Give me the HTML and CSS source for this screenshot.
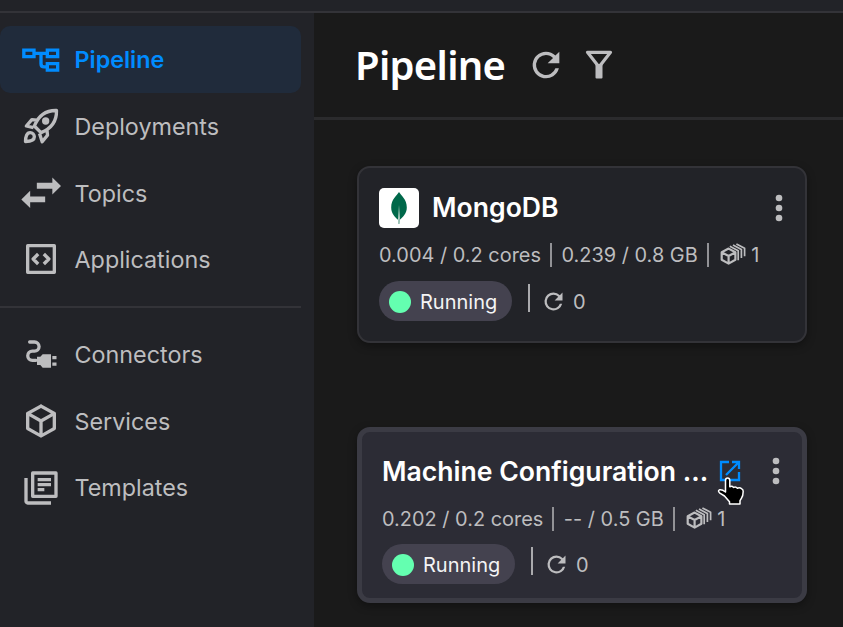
FILE: index.html
```html
<!DOCTYPE html>
<html lang="en">
<head>
<meta charset="utf-8">
<title>Pipeline</title>
<link rel="stylesheet" href="styles.css">
</head>
<body>
<svg class="defs" width="0" height="0">
  <symbol id="refresh" viewBox="0 0 24 24"><path d="M17.65 6.35A7.958 7.958 0 0 0 12 4a8 8 0 1 0 7.73 10h-2.08A6 6 0 1 1 12 6c1.66 0 3.14.69 4.22 1.78L13 11h7V4z"/></symbol>
  <symbol id="dots" viewBox="0 0 24 24"><circle cx="12" cy="6" r="2"/><circle cx="12" cy="12" r="2"/><circle cx="12" cy="18" r="2"/></symbol>
  <symbol id="replicas" viewBox="0 0 26 22"><g fill="none" stroke="currentColor" stroke-width="2.200" stroke-linejoin="round"><path d="M8.600 5.600 15.400 9.200v7.600L8.600 20.600 1.700 16.800V9.200zM1.900 9.400l6.700 3.600 6.600-3.600M8.600 13v7.500"/><path d="M9.800 3.300l8.400 4.500v9.400M13 1.900l8.400 4.500v8.600M16.400.9l8.200 4.300v8" stroke-width="1.700"/></g></symbol>
</svg>
<header class="topbar"></header>
<div class="shell">
  <nav class="sidebar">
    <a class="item active"><svg viewBox="0 0 24 24"><path fill="none" stroke="currentColor" stroke-width="2" d="M1.700 6.700h6.100v3.900H1.700zM15.800 6.700H22v3.900h-6.200zM15.800 14.800H22v3.900h-6.200zM8 8.600h8M12 8.600v6.200q0 1.900 1.900 1.900h2"/></svg><span>Pipeline</span></a>
    <a class="item"><svg viewBox="0 0 24 24"><g fill="none" stroke="currentColor" stroke-width="2" stroke-linejoin="round"><path d="M8 12C10 7 14 2.500 21.300 2.700 21.500 10 17 14 12 16zM9.500 8.500 6.500 8.200 3.200 12l4.300 1M15.600 14.500l.3 3-3.200 4-1.600-5"/><path d="M2.700 21.300c0-3 .8-5.300 2.800-5.300 1.400 0 2.500 1.100 2.500 2.500 0 2-2.300 2.800-5.300 2.800z"/></g><circle cx="14.800" cy="9" r="2.200"/></svg><span>Deployments</span></a>
    <a class="item"><svg viewBox="0 0 24 24"><path transform="translate(0 -.9)" d="M9.500 6.800h9.300V3.600L24 8.700l-5.200 5.100v-3.500H9.500zM14.500 15h-9v-3.500L.2 16.800l5.300 5.100v-3.500h9z"/></svg><span>Topics</span></a>
    <a class="item code"><svg viewBox="0 0 24 24"><path fill="none" stroke="currentColor" stroke-width="2" stroke-linejoin="round" d="M4 4h16v16H4zM10.300 9l-3 3 3 3M13.700 9l3 3-3 3"/></svg><span>Applications</span></a>
    <hr>
    <a class="item"><svg viewBox="0 0 24 24"><path fill="none" stroke="currentColor" stroke-width="2" stroke-linecap="round" d="M5.200 4.200h2.900a2.750 2.750 0 0 1 0 5.500H6.800a2.750 2.750 0 0 0 0 5.500H9"/><path d="M9.600 13h2l1.400-1.400h5v8h-5L11.600 18h-2zM18.800 12.600h2.500v2h-2.500zM18.800 16.500h2.500v2h-2.500z"/></svg><span>Connectors</span></a>
    <a class="item"><svg viewBox="0 0 24 24"><path d="M21 16.500c0 .380-.210.710-.530.880l-7.900 4.440c-.160.120-.360.180-.570.180s-.410-.060-.570-.180l-7.900-4.440A.99.99 0 0 1 3 16.500v-9c0-.380.210-.710.530-.880l7.900-4.440c.160-.120.360-.180.570-.180s.410.060.570.180l7.900 4.440c.320.170.530.500.530.880zM12 4.150 6.040 7.500 12 10.850l5.960-3.350zM5 15.910l6 3.380v-6.710L5 9.210zm14 0v-6.700l-6 3.370v6.710z"/></svg><span>Services</span></a>
    <a class="item"><svg viewBox="0 0 24 24"><path d="M4 6H2v14c0 1.100.9 2 2 2h14v-2H4z"/><path fill="none" stroke="currentColor" stroke-width="2" stroke-linejoin="round" d="M7 3h14v14H7zM10 7h8M10 10h8M10 13h4"/></svg><span>Templates</span></a>
  </nav>
  <main class="main">
    <div class="head"><h1>Pipeline</h1><svg class="h-refresh"><use href="#refresh"/></svg><svg class="h-filter" viewBox="0 0 28 29"><path fill="none" stroke="currentColor" stroke-width="3.200" stroke-linejoin="round" d="M2.500 2.300h23L14 17z"/><path d="M10.500 14h7v13.500q0 1-1 1h-5q-1 0-1-1z"/></svg></div>
    <section class="cards">
      <article class="card">
        <div class="title"><svg class="logo" viewBox="0 0 40 40"><rect width="40" height="40" rx="5" fill="#fff"/><path fill="#00684a" d="M20 4c2 3.500 7.800 7 7.800 15.500 0 6-3.800 9.500-7 12.200L20.300 36h-.8l-.5-4.300c-3.200-2.700-6.800-6.200-6.800-12.200C12.200 11 18 7.500 20 4z"/><path fill="#c9ddd5" d="M20 17l.8 13-.5 6h-.8l-.4-5z"/></svg><h2>MongoDB</h2><svg class="more"><use href="#dots"/></svg></div>
        <div class="stats"><span>0.004 / 0.2 cores</span><i></i><span>0.239 / 0.8 GB</span><i></i><svg class="reps"><use href="#replicas"/></svg><span>1</span></div>
        <div class="status"><span class="pill"><b></b>Running</span><i></i><svg><use href="#refresh"/></svg><span>0</span></div>
      </article>
      <article class="card hover">
        <div class="title"><h2>Machine Configuration ...</h2><span class="open"><svg viewBox="0 0 22 22"><path fill="none" stroke="currentColor" stroke-width="2.300" d="M10 2H2v18h18v-8M13 2h7v7M20 2 7 15"/></svg><svg class="cursor" viewBox="0 0 28 28"><path fill="#000" stroke="#fff" stroke-width="1.500" stroke-linejoin="round" d="M8.500 3.500Q8.500 1 10.600 1t2.200 2.500v6.300q2-1.300 3.800.6 2.200-1.200 3.800.8 2.200-1 4.400.6 1.400.8 1.400 2.800 0 4.500-2 7.100l-1.200 2V27H12.500v-2.300L7.500 19l-5-3.200q-2-2 0-3 2.500-.6 6 2.200z"/></svg></span><svg class="more"><use href="#dots"/></svg></div>
        <div class="stats"><span>0.202 / 0.2 cores</span><i></i><span>-- / 0.5 GB</span><i></i><svg class="reps"><use href="#replicas"/></svg><span>1</span></div>
        <div class="status"><span class="pill"><b></b>Running</span><i></i><svg><use href="#refresh"/></svg><span>0</span></div>
      </article>
    </section>
  </main>
</div>
</body>
</html>
```
FILE: styles.css
```css
* { box-sizing: border-box; margin: 0; padding: 0; }
html, body { height: 100%; overflow: hidden; }
body { display: flex; flex-direction: column; background: #1a1a1a; color: #bdbdbf; font-family: Inter, sans-serif; font-size: 24px; }
svg { display: block; flex: none; fill: currentColor; }
.defs { position: absolute; }
.topbar { flex: none; height: 13px; background: #222328; border-bottom: 2px solid #333338; }
.shell { flex: 1; display: flex; min-height: 0; }
.sidebar { width: 314px; flex: none; background: #222328; padding: 13px 13px 0 0; }
.item { display: flex; align-items: center; gap: 13.500px; height: 66.67px; padding-left: 21px; font-size: 23.330px; line-height: 30px; }
.item svg { width: 40px; height: 40px; }
.item span { padding-top: 2px; }
.item.active span, .item.code span, hr ~ .item span { padding-top: 1px; }
.item.active { background: #202b3b; color: #008cff; font-weight: 600; border-radius: 10px; }
hr { border: 0; height: 2px; background: #333338; margin: 13px 0 13.600px; }
.main { flex: 1; min-width: 0; }
.head { height: 107px; display: flex; align-items: center; border-bottom: 3px solid #2b2b2d; padding-left: 41px; }
h1 { color: #fff; font: 600 40px/50px "Noto Sans", sans-serif; letter-spacing: -.7px; }
.h-refresh { width: 40px; height: 40px; margin: -1px 0 0 21px; }
.h-filter { width: 28px; height: 29px; margin: -1px 0 0 19px; }
.cards { padding: 46px 36px 0 43px; display: flex; flex-direction: column; gap: 84px; }
.card { height: 177px; border: 2px solid #333338; border-radius: 13px; background: #222328; padding: 20px 20px 0; box-shadow: 0 3px 8px rgba(0,0,0,.35); }
.card.hover { background: #2c2c35; border: 5px solid #3b3b44; height: 176px; padding-top: 19px; }
.title { display: flex; align-items: center; height: 40px; }
.logo { width: 40px; height: 40px; margin-right: 13px; }
h2 { color: #fff; font-size: 26.6px; font-weight: 600; white-space: nowrap; line-height: 38px; padding-bottom: 2px; }
.hover h2 { padding-bottom: 1px; }
.more { width: 40px; height: 40px; margin: 0 -14px 0 auto; }
.stats { display: flex; align-items: center; height: 26px; margin-top: 14px; font-size: 19.950px; white-space: nowrap; }
.hover .stats { margin: 15px 0 -1px; }
.stats i { width: 2px; height: 24px; margin: 0 9.500px 0 9px; background: #929296; }
.reps { width: 26px; height: 22px; margin: -2px 5.500px 0 1.500px; }
.status { display: flex; align-items: center; height: 40px; margin-top: 13px; font-size: 20px; line-height: 24px; }
.status > span:last-child { padding-top: 1px; }
.pill { display: flex; align-items: center; gap: 9px; width: 133px; height: 40px; border-radius: 20px; padding: 1px 0 0 10px; background: #44424f; color: #f4f4f5; }
.pill b { width: 22px; height: 22px; border-radius: 50%; background: #64ffb0; }
.status i { width: 2px; height: 28px; margin: -7px 10px 0 16px; background: #aaaaad; }
.status svg { width: 27px; height: 27px; margin-right: 6px; }
.open { position: relative; color: #008cff; margin-left: 11px; }
.open > svg:first-child { width: 22px; height: 22px; }
.cursor { position: absolute; left: -2px; top: 17px; width: 28px; height: 28px; }
```
